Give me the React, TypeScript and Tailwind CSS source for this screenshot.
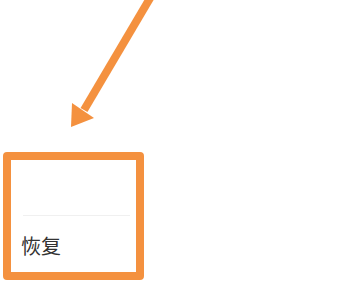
import React from "react";

export default function App() {
  return (
    <div className="w-[351px] h-[281px] bg-white overflow-hidden" style={{ fontFamily: '"Noto Sans CJK SC", "Noto Sans", sans-serif' }}>
      <svg width="351" height="152" viewBox="0 0 351 152" className="block">
        <line x1="152.5" y1="-6" x2="84" y2="110" stroke="#F4913F" strokeWidth="8" />
        <polygon points="71,127 72,103 94,118" fill="#F4913F" />
      </svg>
      <div className="ml-[3px] w-[141px] h-[128px] border-[8px] border-[#F4913F] rounded-[4px] bg-white flex flex-col">
        <div className="h-[55px]" />
        <div className="ml-[12px] mr-[6px] h-px bg-[#f0f0f0]" />
        <div className="flex-1 flex items-center pl-[10px] pt-[4px] text-[20px] text-[#333333] leading-none">
          恢复
        </div>
      </div>
    </div>
  );
}
